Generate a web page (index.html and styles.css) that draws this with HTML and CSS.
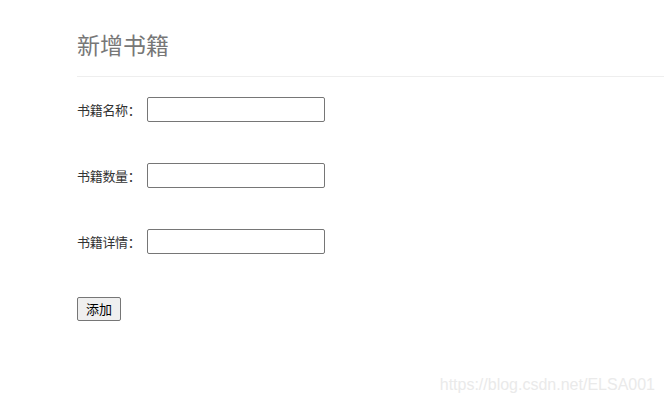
FILE: index.html
```html
<!DOCTYPE html>
<html lang="zh">
<head>
<meta charset="utf-8">
<title>新增书籍</title>
<link rel="stylesheet" href="styles.css">
</head>
<body>
<div class="page">
  <div class="page-header">
    <h1 class="title">新增书籍</h1>
  </div>
  <form class="form">
    <div class="row"><label class="label">书籍名称：</label><input class="field" type="text"></div>
    <div class="row"><label class="label">书籍数量：</label><input class="field" type="text"></div>
    <div class="row"><label class="label">书籍详情：</label><input class="field" type="text"></div>
    <div class="row btn-row"><button class="btn" type="button">添加</button></div>
  </form>
</div>
<div class="watermark">https://blog.csdn.net/ELSA001</div>
</body>
</html>
```
FILE: styles.css
```css
html, body {
  margin: 0;
  padding: 0;
  background: #fff;
}
body {
  font-family: "Noto Sans CJK SC", "Liberation Sans", sans-serif;
  color: #333;
  font-size: 13px;
  position: relative;
  width: 664px;
  height: 406px;
  overflow: hidden;
}
.page {
  padding-left: 77px;
  padding-top: 26px;
}
.page-header {
  border-bottom: 1px solid #eee;
  padding-bottom: 14px;
}
.title {
  margin: 0;
  font-size: 23px;
  font-weight: 400;
  color: #777;
  line-height: 36px;
}
.form {
  display: flex;
  flex-direction: column;
  gap: 41px;
  padding-top: 20px;
}
.row {
  display: flex;
  align-items: center;
  height: 25px;
}
.label {
  font-size: 13px;
  color: #333;
  width: 70px;
  letter-spacing: -0.3px;
}
.field {
  box-sizing: border-box;
  width: 178px;
  height: 25px;
  border: 1px solid #767676;
  border-radius: 2px;
  margin: 0;
  padding: 1px 2px;
  font-size: 13px;
  background: #fff;
}
.btn-row {
  margin-top: 1px;
}
.btn {
  box-sizing: border-box;
  height: 24px;
  width: 44px;
  padding: 0;
  margin: 0;
  border: 1px solid #767676;
  border-radius: 2px;
  background: #efefef;
  color: #000;
  font-family: "Noto Sans CJK SC", sans-serif;
  font-size: 13px;
}
.watermark {
  position: absolute;
  right: 9px;
  top: 376px;
  font-family: "Liberation Sans", sans-serif;
  font-size: 16px;
  color: #eaeaea;
}
```
